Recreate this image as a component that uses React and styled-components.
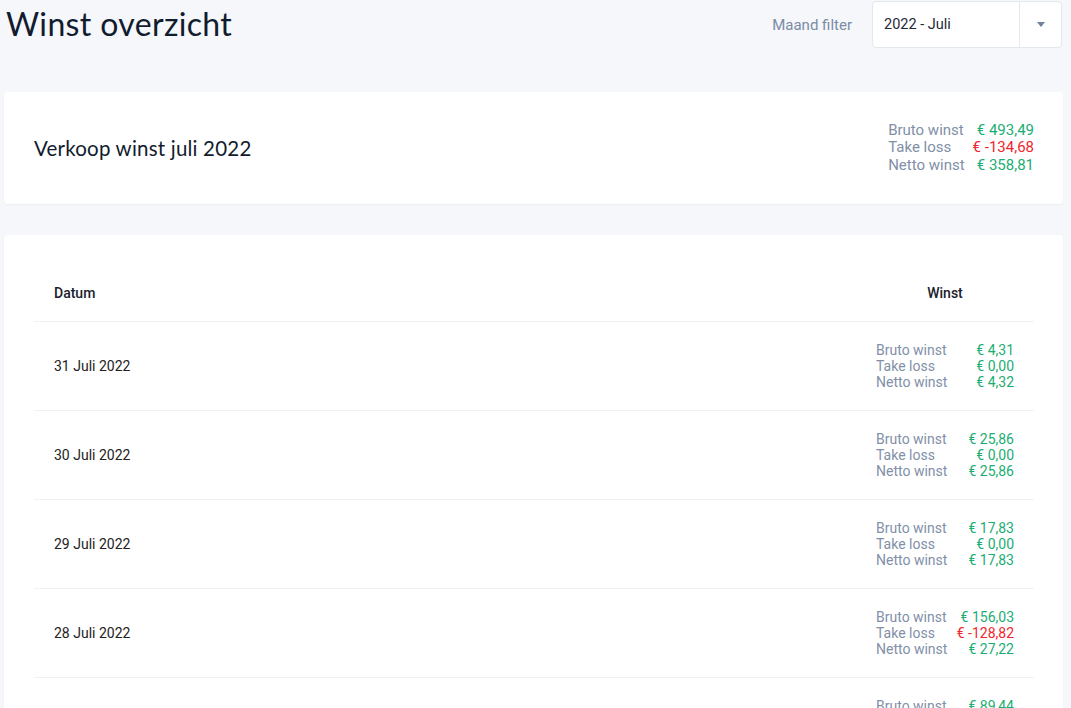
import React from "react";
import styled, { createGlobalStyle } from "styled-components";

const GlobalStyle = createGlobalStyle`
  body {
    margin: 0;
    background: #f5f7fb;
    font-family: Roboto, "Liberation Sans", sans-serif;
    color: #1a202c;
  }
`;

const Page = styled.div`
  padding: 1px 8px 0 4px;
`;

const TopBar = styled.div`
  display: flex;
  align-items: center;
  justify-content: space-between;
  height: 47px;
  margin-bottom: 44px;
`;

const PageTitle = styled.h1`
  margin: -2px 0 0 2px;
  font-family: Lato, "Noto Sans", sans-serif;
  font-weight: 400;
  font-size: 32px;
  letter-spacing: 0.35px;
  color: #111c2e;
`;

const FilterGroup = styled.div`
  display: flex;
  align-items: center;
  gap: 20px;
  margin-right: 1px;
`;

const FilterLabel = styled.span`
  font-size: 15px;
  color: #7c8ba5;
`;

const Select = styled.div`
  display: flex;
  width: 188px;
  height: 45px;
  background: #fff;
  border: 1px solid #e3e7ee;
  border-radius: 4px;
`;

const SelectValue = styled.div`
  flex: 1;
  display: flex;
  align-items: center;
  padding-left: 11px;
  font-size: 14.5px;
  color: #1f2937;
`;

const SelectToggle = styled.div`
  width: 41px;
  border-left: 1px solid #e3e7ee;
  display: flex;
  align-items: center;
  justify-content: center;

  &::after {
    content: "";
    border-left: 4.5px solid transparent;
    border-right: 4.5px solid transparent;
    border-top: 5px solid #6f819b;
  }
`;

const Card = styled.div`
  background: #fff;
  border-radius: 4px;
  box-shadow: 0 1px 2px rgba(20, 30, 60, 0.04);
`;

const SummaryCard = styled(Card)`
  height: 112px;
  padding: 0 29px 0 30px;
  display: flex;
  align-items: center;
  justify-content: space-between;
  margin-bottom: 31px;
`;

const SummaryTitle = styled.h2`
  margin: 0;
  font-family: Lato, "Noto Sans", sans-serif;
  font-weight: 400;
  font-size: 20.5px;
  letter-spacing: 0.2px;
  color: #111c2e;
`;

const Breakdown = styled.div`
  display: grid;
  grid-template-columns: ${(p) => (p.$fixed ? "auto 1fr" : "auto auto")};
  column-gap: 8px;
  width: ${(p) => (p.$fixed ? "138px" : "auto")};
  margin-left: auto;
  font-size: ${(p) => (p.$fixed ? "14px" : "15px")};
  line-height: ${(p) => (p.$fixed ? "16px" : "17.5px")};
`;

const Label = styled.span`
  color: #8190a8;
`;

const Amount = styled.span`
  text-align: right;
  color: ${(p) => (p.$negative ? "#f0262d" : "#1cad74")};
`;

const TableCard = styled(Card)`
  padding: 30px 29px 0 30px;
`;

const Table = styled.table`
  width: 100%;
  border-collapse: collapse;
`;

const HeadCell = styled.th`
  height: 56px;
  padding: 0 20px;
  font-size: 14px;
  font-weight: 500;
  color: #1a202c;
  text-align: ${(p) => (p.$center ? "center" : "left")};
  width: ${(p) => (p.$center ? "138px" : "auto")};
  border-bottom: 1px solid #edf0f4;
`;

const Cell = styled.td`
  height: 88px;
  padding: 0 20px;
  font-size: 14px;
  color: #222;
  border-bottom: 1px solid #edf0f4;
`;

const fmt = (n) => "€ " + n.toFixed(2).replace(".", ",");

const rows = [
  { date: "31 Juli 2022", bruto: 4.31, loss: 0, netto: 4.32 },
  { date: "30 Juli 2022", bruto: 25.86, loss: 0, netto: 25.86 },
  { date: "29 Juli 2022", bruto: 17.83, loss: 0, netto: 17.83 },
  { date: "28 Juli 2022", bruto: 156.03, loss: -128.82, netto: 27.22 },
  { date: "27 Juli 2022", bruto: 89.44, loss: 0, netto: 89.44 },
];

const ProfitBreakdown = ({ bruto, loss, netto, fixed }) => (
  <Breakdown $fixed={fixed}>
    <Label>Bruto winst</Label>
    <Amount $negative={bruto < 0}>{fmt(bruto)}</Amount>
    <Label>Take loss</Label>
    <Amount $negative={loss < 0}>{fmt(loss)}</Amount>
    <Label>Netto winst</Label>
    <Amount $negative={netto < 0}>{fmt(netto)}</Amount>
  </Breakdown>
);

const App = () => {
  return (
    <>
      <GlobalStyle />
      <Page>
        <TopBar>
          <PageTitle>Winst overzicht</PageTitle>
          <FilterGroup>
            <FilterLabel>Maand filter</FilterLabel>
            <Select>
              <SelectValue>2022 - Juli</SelectValue>
              <SelectToggle />
            </Select>
          </FilterGroup>
        </TopBar>

        <SummaryCard>
          <SummaryTitle>Verkoop winst juli 2022</SummaryTitle>
          <ProfitBreakdown bruto={493.49} loss={-134.68} netto={358.81} />
        </SummaryCard>

        <TableCard>
          <Table>
            <thead>
              <tr>
                <HeadCell>Datum</HeadCell>
                <HeadCell $center>Winst</HeadCell>
              </tr>
            </thead>
            <tbody>
              {rows.map((r) => (
                <tr key={r.date}>
                  <Cell>{r.date}</Cell>
                  <Cell>
                    <ProfitBreakdown fixed bruto={r.bruto} loss={r.loss} netto={r.netto} />
                  </Cell>
                </tr>
              ))}
            </tbody>
          </Table>
        </TableCard>
      </Page>
    </>
  );
};

export default App;
